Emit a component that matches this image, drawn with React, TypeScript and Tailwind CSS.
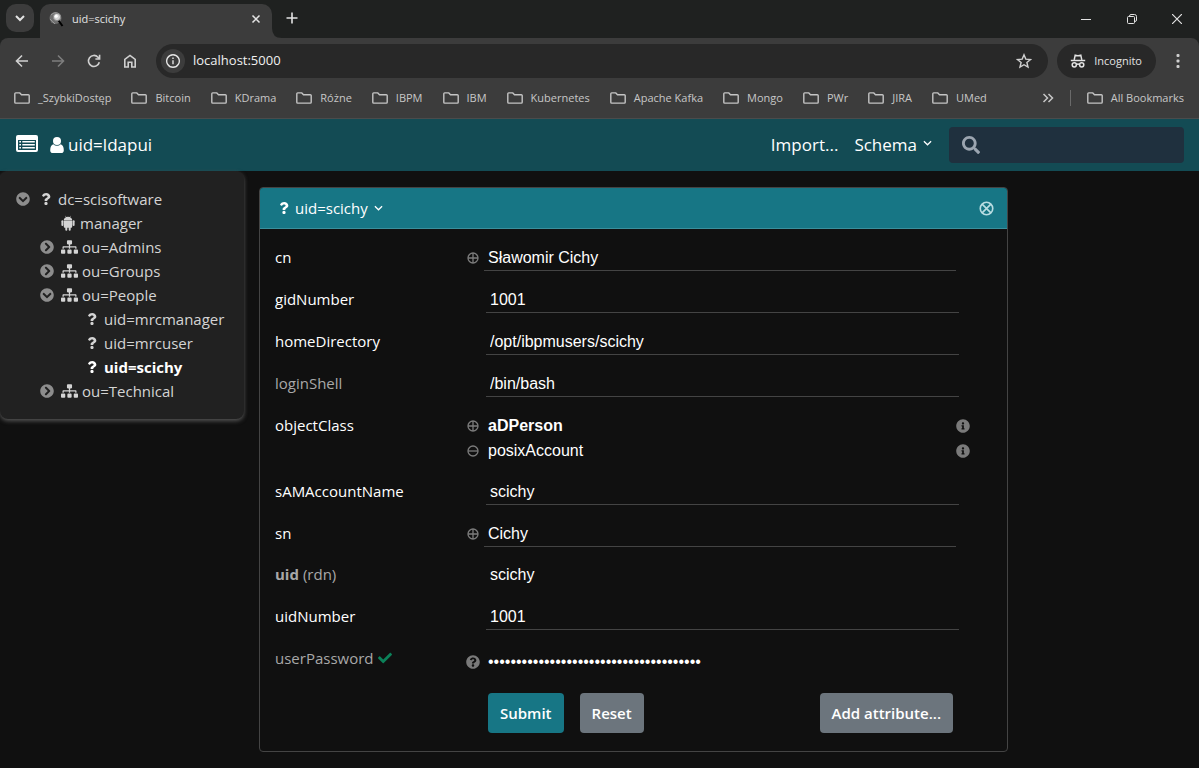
import React from "react";
import {
  FaQuestion,
  FaSitemap,
  FaChevronCircleDown,
  FaChevronCircleRight,
  FaSearch,
  FaInfoCircle,
  FaQuestionCircle,
  FaCheck,
} from "react-icons/fa";

const bookmarks = [
  "_SzybkiDostęp",
  "Bitcoin",
  "KDrama",
  "Różne",
  "IBPM",
  "IBM",
  "Kubernetes",
  "Apache Kafka",
  "Mongo",
  "PWr",
  "JIRA",
  "UMed",
];

type IconProps = { className?: string };

function Folder({ className = "" }: IconProps) {
  return (
    <svg viewBox="0 0 16 12" className={`h-3 w-4 shrink-0 ${className}`} fill="none" stroke="#c4c4c4" strokeWidth="1.4" aria-hidden="true">
      <path d="M1.7 .9h4.1l1.7 1.8h6.8q.9 0 .9.9v6.6q0 .9-.9.9H1.7q-.9 0-.9-.9V1.8q0-.9.9-.9z" />
    </svg>
  );
}

function Stroke({ d, className = "", width = 1.6, box = "0 0 16 16" }: IconProps & { d: string; width?: number; box?: string }) {
  return (
    <svg viewBox={box} className={`shrink-0 ${className}`} fill="none" stroke="currentColor" strokeWidth={width} aria-hidden="true">
      <path d={d} />
    </svg>
  );
}

function Android({ className = "" }: IconProps) {
  return (
    <svg viewBox="0 0 14 16" className={className} fill="currentColor" aria-hidden="true">
      <path d="M4.2.9l.3-.2.8 1.3a4.8 4.8 0 0 1 3.4 0L9.5.7l.3.2-.8 1.4c1.400.7 2.200 1.700 2.200 2.900H2.800c0-1.200.8-2.200 2.200-2.900z" />
      <path d="M2.800 5.500h8.400v6.300q0 .9-.9.9H9.700v2q0 1-1 1t-1-1v-2H6.300v2q0 1-1 1t-1-1v-2h-.6q-.9 0-.9-.9z" />
      <rect x=".4" y="5.300" width="2" height="5.600" rx="1" />
      <rect x="11.600" y="5.300" width="2" height="5.600" rx="1" />
    </svg>
  );
}

function ListAlt() {
  return (
    <svg viewBox="0 0 22 17" className="h-[17px] w-[22px]" aria-hidden="true">
      <path
        fill="#fff"
        fillRule="evenodd"
        d="M2 0h18q2 0 2 2v13q0 2-2 2H2q-2 0-2-2V2q0-2 2-2zM2 5v9.500q0 .5.500.5h17q.5 0 .5-.5V5z"
      />
      <path fill="#fff" d="M3.300 6h1.700v1.600H3.300zM3.300 9h1.700v1.600H3.300zM3.300 12h1.700v1.600H3.300zM6.300 6h12.500v1.600H6.300zM6.300 9h12.500v1.600H6.300zM6.300 12h12.500v1.600H6.300z" />
    </svg>
  );
}

function UserIcon() {
  return (
    <svg viewBox="0 0 14 16" className="h-4 w-[14px]" fill="#fff" aria-hidden="true">
      <circle cx="7" cy="4" r="4" />
      <path d="M3.400 7.200Q.2 8 .2 13.200.2 16 2.800 16h8.400q2.600 0 2.600-2.800 0-5.200-3.200-6Q9.200 8.800 7 8.800T3.400 7.200z" />
    </svg>
  );
}

function Incognito() {
  return (
    <svg viewBox="0 0 16 16" className="h-4 w-4" fill="none" stroke="#e3e3e3" strokeWidth="1.500" aria-hidden="true">
      <path d="M4.200 6.800L5.200 2.200Q8 3.200 10.800 2.200l1 4.600" />
      <path d="M.8 7.500h14.400" />
      <circle cx="4.300" cy="11.800" r="2.100" />
      <circle cx="11.700" cy="11.800" r="2.100" />
      <path d="M6.400 11.500q1.600-.9 3.200 0" />
    </svg>
  );
}

function CircleOp({ op, className = "" }: { op: "plus" | "minus" | "times"; className?: string }) {
  const d = { plus: "M6 1v10M1 6h10", minus: "M1 6h10", times: "M2.500 2.500l7 7M9.500 2.500l-7 7" }[op];
  return (
    <svg viewBox="0 0 12 12" className={className} fill="none" stroke="currentColor" strokeWidth="1.300" aria-hidden="true">
      <circle cx="6" cy="6" r="5" />
      <path d={d} />
    </svg>
  );
}

function BrowserChrome() {
  return (
    <div className="bg-[#1f2120] font-['Open_Sans',sans-serif] text-[11px] text-[#e3e3e3]">
      <div className="flex h-[38px] items-end pl-[6px]">
        <button aria-label="Search tabs" className="mb-[6px] grid h-7 w-7 place-items-center rounded-[10px] bg-[#3c3c3c]">
          <Stroke d="M4 6l4 4 4-4" className="h-4 w-4" width={2} />
        </button>
        <div className="ml-[6px] flex h-[34px] w-[232px] items-center rounded-t-[10px] bg-[#3c3c3c] px-[9px] pb-1">
          <svg viewBox="0 0 16 16" className="h-4 w-4" aria-hidden="true">
            <circle cx="6.500" cy="7" r="6" fill="#6e6e6e" />
            <path d="M2 4q4-4 8-1M1 8q3 3 5 5" stroke="#999" fill="none" />
            <path d="M9.500 9.500l4 5.500" stroke="#000" strokeWidth="2" />
            <circle cx="8" cy="6" r="3.600" fill="#d4d4d4" stroke="#8c8c8c" />
            <circle cx="7.200" cy="5.200" r="1.600" fill="#fff" />
          </svg>
          <span className="ml-[7px] flex-1">uid=scichy</span>
          <button aria-label="Close tab">
            <Stroke d="M4 4l8 8M12 4l-8 8" className="h-[14px] w-[14px]" width={1.8} />
          </button>
        </div>
        <svg viewBox="0 0 10 10" className="h-[10px] w-[10px]" fill="#3c3c3c" aria-hidden="true">
          <path d="M0 0q0 10 10 10H0z" />
        </svg>
        <button aria-label="New tab" className="mb-3 ml-[2px]">
          <Stroke d="M8 2.500v11M2.500 8h11" className="h-4 w-4" />
        </button>
        <div className="ml-auto flex h-[38px] items-center">
          <button aria-label="Minimize" className="grid h-9 w-[46px] place-items-center">
            <Stroke d="M0 5.500h10" box="0 0 10 10" className="h-[10px] w-[10px]" width={1} />
          </button>
          <button aria-label="Restore" className="grid h-9 w-[46px] place-items-center">
            <Stroke
              d="M1.500 2.500h5q1 0 1 1v5q0 1-1 1h-5q-1 0-1-1v-5q0-1 1-1zM2.500 2.200q0-1.700 1.500-1.700h3.500q2 0 2 2V6q0 1.500-1.700 1.500"
              box="0 0 10 10"
              className="h-[10px] w-[10px]"
              width={1}
            />
          </button>
          <button aria-label="Close" className="grid h-9 w-11 place-items-center">
            <Stroke d="M0 0l10 10M10 0L0 10" box="0 0 10 10" className="h-[10px] w-[10px]" width={1.2} />
          </button>
        </div>
      </div>

      <div className="rounded-t-lg border-b border-[#4a4c4c] bg-[#3c3c3c]">
        <div className="flex h-[46px] items-center pr-[13px] pl-[14px]">
          <div className="flex gap-5 text-[#d0d0d0]">
            <button aria-label="Back">
              <Stroke d="M14 8H2.800M8 2.500L2.500 8 8 13.500" className="h-4 w-4" />
            </button>
            <button aria-label="Forward" className="text-[#7d7d7d]">
              <Stroke d="M2 8h11.200M8 2.500L13.500 8 8 13.500" className="h-4 w-4" />
            </button>
            <button aria-label="Reload">
              <Stroke d="M13.300 9.200A5.500 5.500 0 1 1 12 4.200L13.600 6M13.600 1.800V6H9.400" className="h-4 w-4" />
            </button>
            <button aria-label="Home">
              <Stroke d="M2.800 14V6.400L8 2.400l5.200 4V14H9.800V9.200H6.200V14z" className="h-4 w-4" />
            </button>
          </div>
          <div className="ml-[18px] flex h-[34px] flex-1 items-center rounded-full bg-[#282828] pr-4 pl-[5px]">
            <button aria-label="Site information" className="grid h-6 w-6 place-items-center rounded-full bg-[#3c3c3c]">
              <Stroke d="M8 1.700a6.300 6.300 0 1 0 .01 0M8 7.200v4M8 4.500v1.500" className="h-4 w-4" width={1.4} />
            </button>
            <input
              aria-label="Address"
              defaultValue="localhost:5000"
              className="ml-2 min-w-0 flex-1 bg-transparent text-[13px] text-[#f0f0f0] outline-none"
            />
            <button aria-label="Bookmark this page">
              <Stroke
                d="M8 1.800l1.800 4.300 4.700.4-3.600 3 1.100 4.600L8 11.700l-4 2.400 1.100-4.600-3.600-3 4.700-.4z"
                className="h-4 w-4 text-[#d0d0d0]"
                width={1.4}
              />
            </button>
          </div>
          <button className="ml-[9px] flex h-[34px] items-center gap-2 rounded-full bg-[#282828] pr-[14px] pl-[13px]">
            <Incognito />
            Incognito
          </button>
          <button aria-label="Menu" className="ml-[14px]">
            <svg viewBox="0 0 16 16" className="h-4 w-4" fill="#d0d0d0" aria-hidden="true">
              <rect x="6.500" y="1" width="3" height="3" rx="1" />
              <rect x="6.500" y="6.500" width="3" height="3" rx="1" />
              <rect x="6.500" y="12" width="3" height="3" rx="1" />
            </svg>
          </button>
        </div>
        <div className="flex h-[34px] items-center pr-[15px] pb-[6px] pl-[14px] whitespace-nowrap text-[#c7c7c7]">
          <div className="flex min-w-0 gap-5">
            {bookmarks.map((name) => (
              <a key={name} href="#" className="flex items-center gap-2">
                <Folder />
                {name}
              </a>
            ))}
          </div>
          <button aria-label="More bookmarks" className="ml-auto">
            <Stroke d="M3.500 4l4 4-4 4M8.500 4l4 4-4 4" className="h-4 w-4" width={1.5} />
          </button>
          <span className="mr-4 ml-[14px] h-4 w-px bg-[#6a6a6a]" />
          <a href="#" className="flex items-center gap-2">
            <Folder />
            All Bookmarks
          </a>
        </div>
      </div>
    </div>
  );
}

function NavBar() {
  return (
    <nav className="flex h-[52px] items-center bg-[#134b54] pr-[15px] pl-4 text-[17px] text-white">
      <button aria-label="Toggle tree" className="mb-1">
        <ListAlt />
      </button>
      <a href="#" className="ml-3 flex items-center gap-1">
        <UserIcon />
        uid=ldapui
      </a>
      <a href="#" className="ml-auto">
        Import...
      </a>
      <button className="ml-4 flex items-center gap-[6px]">
        Schema
        <Stroke d="M1 1l4 4 4-4" box="0 0 10 6" className="mb-1 h-[6px] w-[9px]" width={1.4} />
      </button>
      <label className="ml-[17px] flex h-9 w-[235px] items-center gap-2 rounded bg-[#1f303e] px-[13px]">
        <FaSearch className="h-[18px] w-[18px] shrink-0 text-[#9ba5b0]" />
        <input aria-label="Search" className="w-full min-w-0 bg-transparent outline-none" />
      </label>
    </nav>
  );
}

type Node = { level: 0 | 1 | 2; open?: boolean; icon: "question" | "android" | "sitemap"; name: string; active?: boolean };

const tree: Node[] = [
  { level: 0, open: true, icon: "question", name: "dc=scisoftware" },
  { level: 1, icon: "android", name: "manager" },
  { level: 1, open: false, icon: "sitemap", name: "ou=Admins" },
  { level: 1, open: false, icon: "sitemap", name: "ou=Groups" },
  { level: 1, open: true, icon: "sitemap", name: "ou=People" },
  { level: 2, icon: "question", name: "uid=mrcmanager" },
  { level: 2, icon: "question", name: "uid=mrcuser" },
  { level: 2, icon: "question", name: "uid=scichy", active: true },
  { level: 1, open: false, icon: "sitemap", name: "ou=Technical" },
];

const indents = { 0: "pl-0", 1: "pl-6", 2: "pl-[46px]" };

function TreeRow({ node }: { node: Node }) {
  return (
    <li className={`flex h-6 items-center ${indents[node.level]}`}>
      <span className="flex w-6 shrink-0">
        {node.open !== undefined && (
          <button aria-label={node.open ? "Collapse" : "Expand"} className="text-[#8d8d8d]">
            {node.open ? <FaChevronCircleDown className="h-[14px] w-[14px]" /> : <FaChevronCircleRight className="h-[14px] w-[14px]" />}
          </button>
        )}
      </span>
      <a href="#" className={`flex items-center ${node.active ? "font-bold text-white" : ""}`}>
        {node.icon === "question" && <FaQuestion className="mr-[6px] h-3 w-3" />}
        {node.icon === "android" && <Android className="mr-[5px] ml-[-3px] h-4 w-[14px]" />}
        {node.icon === "sitemap" && <FaSitemap className="mr-1 ml-[-3px] h-4 w-[17px]" />}
        {node.name}
      </a>
    </li>
  );
}

function Label({ htmlFor, muted = false, children }: { htmlFor?: string; muted?: boolean; children: React.ReactNode }) {
  return (
    <label htmlFor={htmlFor} className={`mb-[2px] flex h-6 w-[187px] shrink-0 items-center ${muted ? "text-[#a8a8a8]" : ""}`}>
      {children}
    </label>
  );
}

const valueFont = "font-['Liberation_Sans',Arial,sans-serif] text-base";

type FieldProps = { name: string; value: string; plus?: boolean; muted?: boolean; plain?: boolean; label?: React.ReactNode };

function Field({ name, value, plus = false, muted = false, plain = false, label }: FieldProps) {
  return (
    <div className={`flex items-center ${plain ? "h-[41px]" : "h-[42px]"}`}>
      <Label htmlFor={name} muted={muted}>
        {label ?? name}
      </Label>
      <span className="flex w-[22px] shrink-0 justify-center">
        {plus && (
          <button type="button" aria-label={`Add ${name}`} className="text-[#7c7c7c]">
            <CircleOp op="plus" className="h-3 w-3" />
          </button>
        )}
      </span>
      <input
        id={name}
        defaultValue={value}
        readOnly={plain}
        className={`${plus ? "mr-[51px]" : "mr-12 ml-[2px]"} h-[26px] min-w-0 flex-1 border-b bg-transparent px-1 text-white outline-none ${valueFont} ${
          plain ? "border-transparent" : "border-[#444]"
        }`}
      />
    </div>
  );
}

function ObjectClass({ name, structural = false }: { name: string; structural?: boolean }) {
  return (
    <li className="flex h-[25px] items-center">
      <button type="button" aria-label={structural ? "Add object class" : "Remove object class"} className="flex w-[22px] shrink-0 justify-center text-[#7c7c7c]">
        <CircleOp op={structural ? "plus" : "minus"} className="h-3 w-3" />
      </button>
      <span className={`flex-1 pl-1 ${valueFont} ${structural ? "font-bold" : ""}`}>{name}</span>
      <button type="button" aria-label={`About ${name}`} className="mr-[37px] text-[#7a7a7a]">
        <FaInfoCircle className="h-[14px] w-[14px]" />
      </button>
    </li>
  );
}

function Entry() {
  return (
    <section className="w-full max-w-[749px] rounded border border-[#444]">
      <header className="flex h-[41px] items-center rounded-t-[3px] border-b border-[#3a8f9c] bg-[#177685] px-[13px]">
        <FaQuestion className="mx-[5px] h-3 w-3" />
        <button className="flex items-center gap-[6px]">
          <span>uid=scichy</span>
          <Stroke d="M1 1l4 4 4-4" box="0 0 10 6" className="h-[6px] w-[9px]" width={1.4} />
        </button>
        <button aria-label="Close entry" className="ml-auto text-[#b9dde2]">
          <CircleOp op="times" className="h-[15px] w-[15px]" />
        </button>
      </header>
      <form className="pt-2 pb-[18px] pl-[15px]" onSubmit={(e) => e.preventDefault()}>
        <Field name="cn" value="Sławomir Cichy" plus />
        <Field name="gidNumber" value="1001" />
        <Field name="homeDirectory" value="/opt/ibpmusers/scichy" />
        <Field name="loginShell" value="/bin/bash" muted />
        <div className="flex py-2">
          <Label>objectClass</Label>
          <ul className="flex-1">
            <ObjectClass name="aDPerson" structural />
            <ObjectClass name="posixAccount" />
          </ul>
        </div>
        <Field name="sAMAccountName" value="scichy" />
        <Field name="sn" value="Cichy" plus />
        <Field
          name="uid"
          value="scichy"
          muted
          plain
          label={
            <>
              <b className="mr-1 font-bold">uid</b>(rdn)
            </>
          }
        />
        <Field name="uidNumber" value="1001" />
        <div className="flex h-[42px] items-center">
          <Label htmlFor="userPassword" muted>
            userPassword
            <FaCheck className="ml-1 h-[14px] w-[14px] text-[#0c8159]" />
          </Label>
          <button type="button" aria-label="Check password" className="flex w-[22px] shrink-0 justify-center text-[#7a7a7a]">
            <FaQuestionCircle className="mt-[6px] h-[14px] w-[14px]" />
          </button>
          <input
            id="userPassword"
            type="password"
            defaultValue="{SSHA}wHbIu2Rz0a7v1YQ8dKpX4mNtLs5cGe3f"
            className={`mt-[6px] mr-[51px] min-w-0 flex-1 bg-transparent px-1 text-white outline-none ${valueFont}`}
          />
        </div>
        <div className="mt-[13px] flex gap-4 pr-[54px] pl-[213px] font-semibold">
          <button type="submit" className="h-10 rounded-sm bg-[#177685] px-3">
            Submit
          </button>
          <button type="reset" className="h-10 rounded-sm bg-[#6c757d] px-3">
            Reset
          </button>
          <button type="button" className="ml-auto h-10 rounded-sm bg-[#6c757d] px-3">
            Add attribute...
          </button>
        </div>
      </form>
    </section>
  );
}

export default function App() {
  return (
    <div className="min-h-screen bg-[#101010] font-['Open_Sans',sans-serif] text-[15px] text-white">
      <BrowserChrome />
      <NavBar />
      <main className="flex items-start">
        <ul className="w-[244px] shrink-0 rounded-lg bg-[#212121] p-4 text-[#d4d4d4] shadow-[0_2px_4px_#555]">
          {tree.map((node) => (
            <TreeRow key={node.name} node={node} />
          ))}
        </ul>
        <div className="min-w-0 flex-1 px-[15px] pt-4 pb-4">
          <Entry />
        </div>
      </main>
    </div>
  );
}
